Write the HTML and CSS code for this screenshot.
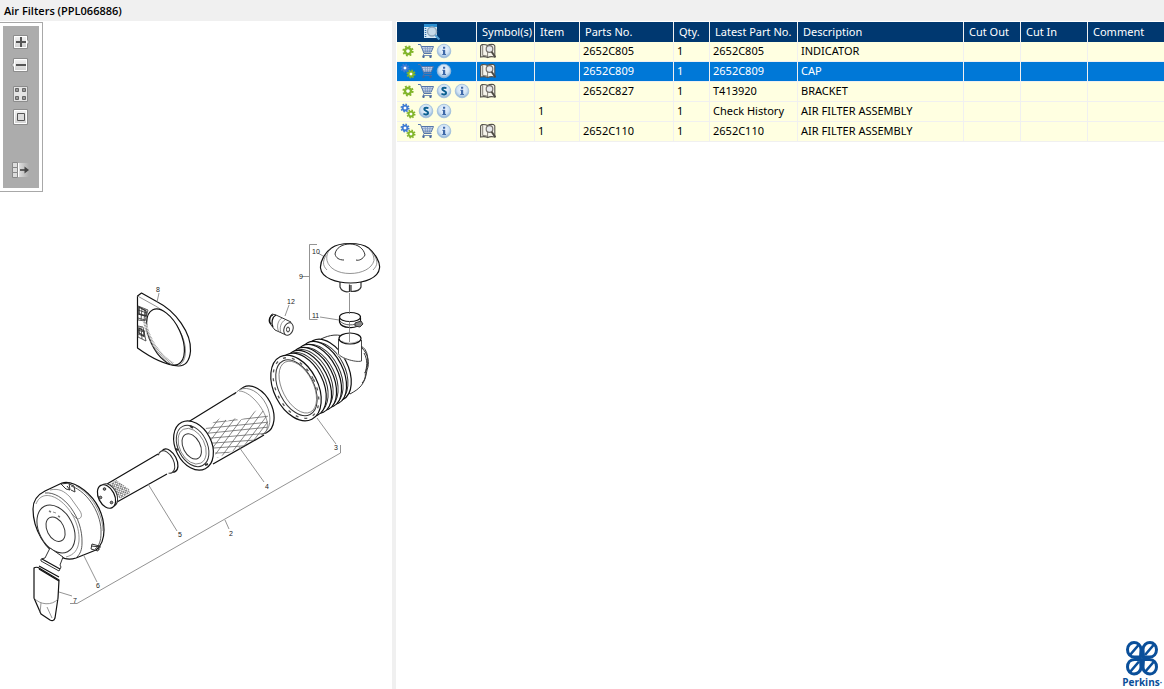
FILE: index.html
```html
<!DOCTYPE html>
<html lang="en">
<head>
<meta charset="utf-8">
<title>Air Filters (PPL066886)</title>
<link rel="stylesheet" href="styles.css">
</head>
<body>
<svg class="defs" aria-hidden="true">
  <defs>
    <linearGradient id="face" x1="0" y1="0" x2="0" y2="1"><stop offset="0" stop-color="#f4f4f4"/><stop offset="1" stop-color="#cfcfcf"/></linearGradient>
    <radialGradient id="ball" cx=".5" cy=".4" r=".6"><stop offset="0" stop-color="#f4f9ff"/><stop offset=".6" stop-color="#cfe2f4"/><stop offset="1" stop-color="#86acd2"/></radialGradient>
    <linearGradient id="fade"><stop offset="0" stop-color="#e8e8e8"/><stop offset="1" stop-color="#acacac"/></linearGradient>
    <symbol id="cog" viewBox="-8 -8 16 16">
      <circle r="5" fill="none" stroke="currentColor" stroke-width="2" stroke-dasharray="2 1.927"/>
      <circle r="3.200" fill="#fff" stroke="currentColor" stroke-width="2.600"/>
    </symbol>
    <symbol id="gear" viewBox="0 0 16 16"><use href="#cog" width="15" height="15" x=".5" y=".5" class="green"/></symbol>
    <symbol id="gears" viewBox="0 0 16 16">
      <use href="#cog" x="-1" y="-1" width="12" height="12" class="blue"/>
      <use href="#cog" x="5" y="5" width="12" height="12" class="green"/>
    </symbol>
    <symbol id="cart" viewBox="0 0 16 16">
      <path d="M3.500 3.500h11.500l-2 5.500H5.500z" fill="#d3deef"/>
      <path d="M3.800 5.300h10.500M4.800 7.200h9M7 3.500l.8 5.500M9.500 3.500v5.500M12.200 3.500l-.8 5.500" fill="none" stroke="#7e99c4" stroke-width=".8"/>
      <path d="M0 1.500h2.500l3.500 9h7.500M3.500 3.500h12l-2.300 5.500H5.500" fill="none" stroke="#5475aa" stroke-width="1"/>
      <path d="M6.200 10.500l-1.200 2h9" fill="none" stroke="#5475aa" stroke-width=".8"/>
      <circle cx="5.500" cy="13.800" r="1.200" fill="#44649a"/><circle cx="12.500" cy="13.800" r="1.200" fill="#44649a"/>
    </symbol>
    <symbol id="info" viewBox="0 0 16 16">
      <circle cx="8" cy="8" r="6.800" fill="url(#ball)" stroke="#9dbddc" stroke-width=".8"/>
      <path d="M7 3.800h2.200v1.900H7zM6.300 6.700h2.900v4.300h.8v1.100H6.300V11H7V7.800h-.7z" fill="#3f69a8"/>
    </symbol>
    <symbol id="sup" viewBox="0 0 16 16">
      <circle cx="8" cy="8" r="6.800" fill="url(#ball)" stroke="#9dbddc" stroke-width=".8"/>
      <path d="M10.300 5.500C9.500 4.500 6.300 4.200 6.200 6.100 6.200 8 10.200 7.600 10.200 9.900c-.1 2-3.600 1.900-4.700.6" fill="none" stroke="#0b5f8f" stroke-width="1.900"/>
    </symbol>
    <symbol id="book" viewBox="0 0 16 16">
      <path d="M.6 2.800L2 1.500c2 0 4-.2 5.500 1 1.800-1.200 4-1.200 6-1L14.800 3v11c-2.500-.5-5.300-.5-7 .5-2-1-4.600-1-7.200-.5z" fill="#f6f4ec" stroke="#55534d" stroke-width="1.100"/>
      <path d="M2.700 2v10.500c2-.2 3.800 0 5 1.200M7.600 3v11" fill="none" stroke="#77736a" stroke-width=".9"/>
      <circle cx="9.500" cy="6" r="3.300" fill="#e7e9ec" stroke="#77736f" stroke-width="1.200"/>
      <path d="M11.600 8.800l3.800 5.500" stroke="#4e4b46" stroke-width="2"/>
    </symbol>
    <clipPath id="gauze"><path d="M206 427l16-10 5 4 9-3 3 3 21-13 8 7-1 17-20 13-30 13-4-10-8-9z"/></clipPath>
    <pattern id="dots" width="3" height="3" patternUnits="userSpaceOnUse" patternTransform="rotate(-25)">
      <path d="M0 0l3 3M3 0L0 3" stroke="#333" stroke-width=".6"/>
    </pattern>
  </defs>
</svg>

<header class="title">Air Filters (PPL066886)</header>
<main class="work">
  <section class="drawing" aria-label="Exploded view">
    <svg class="diagram" viewBox="0 21 392 668">
      <g class="ink">
        <!-- 8 bracket -->
        <path d="M137.500 296l4-3 16 9c18 9 34 31 33 49-1 11-5 15-12 15-14-1-30-10-41-18z" class="bold"/>
        <path d="M137.500 296l18 10c18 10 30 30 30 45 0 8-3 13-7 14.500" class="thin"/>
        <ellipse cx="165.500" cy="337" rx="15.500" ry="30" transform="rotate(-25 165.500 337)" class="bold"/>
        <path d="M145 322c3 18 15 35 28 42" stroke="#888" stroke-width="3.500" stroke-dasharray=".7 .8"/>
        <path d="M138 306l10 4-3 11-7-1zM138 310l9 3M138 314l8 2M138 318l7 2M142 308l-1 12M145 309l-1 12M138 326l5 1 3 14-8-4zM138 330l6 2M138 334l7 3M141 327l1 12" stroke-width=".8"/>
        <path d="M139 307l7 4v5l-7-2zM139 328l5 3v5l-5-3z" fill="none" stroke-width="1.400"/>
        <!-- 10 cap -->
        <path d="M340 280v7c2 5 7 5 9.500 4.500v-7M351 285v6.500c3 0 9-.5 10-4.500v-7" stroke-width="1.200"/>
        <path d="M320.500 268c-.5-7 5-16 11-20 8-6 29-6 37 0 6 5 12 14 11 20-1 10-15 15-29 15s-29-5-30-15z" class="bold"/>
        <path d="M332 247.500c-4 3-6 8-5 13 2 8 11 13 23 13s22-5 24-13c0-5-2-9-6-12.500M326 255c-3 6-4 10 1 15M374 255c4 6 4 10-1 15" class="thin" fill="none"/>
        <path d="M335 254c1-6 7-10 15-10s14 5 15 11c-2 4-6 6-9 5M335 254c1 4 4 6 9 6" fill="none"/>
        <!-- 11 clamp -->
        <ellipse cx="350" cy="317" rx="10.500" ry="4.500" class="bold"/>
        <path d="M339.500 318v4c2 7 17 7 21 2v-6" fill="none" class="bold"/>
        <path d="M340 321c4 5 15 5 20 1" fill="none" stroke-width=".8"/>
        <path d="M355 323l6-2 2 3-3 3-5-1z" fill="#888"/>
        <!-- 3 body -->
        <path d="M321 339c8-4 18-6 26-1l15 10c6 6 8 15 5 22-2 15-8 19-17 24z"/>
        <path d="M360 346c9 2 9 17 6 25M364 353c4 7 3 14 1 20M362 383c3-3 4-7 3-11" fill="none"/>
        <g transform="translate(328 370) rotate(-27)"><ellipse rx="20" ry="33" class="bold"/></g>
        <g transform="translate(325 372) rotate(-27)"><ellipse rx="20" ry="32"/></g>
        <g transform="translate(323 373) rotate(-27)"><ellipse rx="20" ry="34" class="bold"/></g>
        <g transform="translate(320 375) rotate(-27)"><ellipse rx="20" ry="32.500"/></g>
        <g transform="translate(318 376) rotate(-27)"><ellipse rx="20" ry="34" class="bold"/></g>
        <g transform="translate(315 378) rotate(-27)"><ellipse rx="20" ry="32.500"/></g>
        <g transform="translate(313 379) rotate(-27)"><ellipse rx="20" ry="34" class="bold"/></g>
        <g transform="translate(310 380) rotate(-27)"><ellipse rx="20" ry="32.500"/></g>
        <g transform="translate(308 382) rotate(-27)"><ellipse rx="20" ry="34" class="bold"/></g>
        <g transform="translate(305 383) rotate(-27)"><ellipse rx="20" ry="32.500"/></g>
        <g transform="translate(302 385) rotate(-27)"><ellipse rx="21" ry="34" class="bold"/></g>
        <g transform="translate(296 388) rotate(-27)"><ellipse rx="22" ry="35" class="bold"/><ellipse rx="19.500" ry="32.500" stroke="#555" stroke-width="1.300" stroke-dasharray="3 6"/><ellipse cx=".5" rx="17.500" ry="30"/><ellipse cx="2" rx="15.500" ry="28" class="thin"/></g>
        <path d="M338.500 339l-1 16c4 4 19 7 24 4l-.5-19" stroke="none"/>
        <path d="M338.500 339v14c-1 4 17 10 23 8v-21" fill="none" stroke-width=".9"/>
        <ellipse cx="350" cy="338.500" rx="11" ry="5.500" class="bold"/>
        <path d="M342 341c3 3 12 3 16 0" class="thin"/>
        <path d="M349.500 293v21M349.500 321v21" class="lead"/>
        <!-- 12 indicator -->
        <path d="M272 314l4 1 15 7-5 13-11-5-4-5c-2-4-1-9 1-11z"/>
        <path d="M273 315c-4 1-5 7-2 9M276 315c-4 2-5 8-3 12" class="bold" fill="none" stroke-width="1.600"/>
        <path d="M282 318c-4 2-6 9-3 14M285 320c-4 2-6 8-4 13" fill="none" class="thin"/>
        <ellipse cx="288.500" cy="329" rx="4.500" ry="6.500" transform="rotate(20 288.500 329)"/>
        <ellipse cx="288" cy="329.500" rx="1.500" ry="2.500"/>
        <!-- 4 element -->
        <g transform="translate(255 410) rotate(-27)"><ellipse rx="17" ry="25.500" class="bold"/></g>
        <g transform="translate(251 412) rotate(-27)"><ellipse rx="17" ry="25" class="thin"/></g>
        <path d="M189 421.500l54-31.500 19 46-49 28z" stroke="none"/>
        <path d="M189 421.500l47-29M213 464l51-29" class="bold"/>
        <path d="M239 391c11 0 25 17 28 30 1 6 0 10-3 13" class="thin" fill="none"/>
        <path clip-path="url(#gauze)" fill="none" stroke="#555" stroke-width=".7" d="M200 444l27-36M204 449l31-41M208 454l34-45M212 459l37-50M216 464l40-54M221 467l42-56M228 467l38-50M235 465l38-50M242 465l33-43M200 424l70-8M200 429l70-7M200 434l70-7M200 439l70-6M200 444l70-5M200 449l70-5M200 454l70-4M200 459l70-4"/>
        <g transform="translate(193.500 445.500) rotate(-27)"><ellipse rx="18" ry="26" class="bold"/><ellipse cx="-1" rx="14.500" ry="22"/><ellipse cx="-1.500" rx="12.500" ry="19" class="thin"/><ellipse cx="-2" rx="8.500" ry="13.500"/></g>
        <path d="M190 426l3 2M205 465l3-1M176 449l2 1" stroke-width="2"/>
        <!-- 5 inner element -->
        <g transform="translate(169.500 460.500) rotate(-27)"><ellipse rx="7" ry="12.500" class="bold"/></g>
        <g transform="translate(166.500 462) rotate(-27)"><ellipse rx="7" ry="12"/></g>
        <path d="M107 484l52-29 10 18-52 29z" stroke="none"/>
        <path d="M107 484l51-30M117 502l50-28" class="bold"/>
        <path d="M110 484l6-4 13 9 1 4-10 6z" fill="url(#dots)" stroke="none"/>
        <g transform="translate(109 495) rotate(-27)"><ellipse rx="7.500" ry="12"/></g>
        <g transform="translate(106.500 496.500) rotate(-27)"><ellipse rx="8" ry="12.500" class="bold"/></g>
        <g fill="#888"><circle cx="104.500" cy="489" r="1.300"/><circle cx="100.500" cy="497.500" r="1.300"/><circle cx="111.500" cy="502.500" r="1.300"/></g>
        <!-- 6 cover -->
        <path d="M33 509c0-9 4-14 12-18l17-8c7-2 14 1 22 7 13 10 20 25 20 40 0 10-3 16-8 20l-20 8c-6 2-12 1-16-2-14-6-27-26-27-47z" class="bold"/>
        <path d="M71 486c18 6 31 30 30 47 0 8-2 13-6 16M45 493c18-2 38 24 37 50 0 7-2 11-5 14" fill="none" stroke-width=".8"/>
        <path d="M76 486c16 8 27 29 27 45M36 504c4-10 12-10 20-6 14 8 24 26 23 43-1 9-5 14-13 16M50 490c9-2 14 1 20 7l10 14c3 5 1 8-3 8l-6-6" class="thin" fill="none"/>
        <g transform="translate(56 529) rotate(-27)"><ellipse rx="17" ry="25.500"/><ellipse cx="-.5" rx="8.500" ry="13"/></g>
        <path d="M49 511l2 1M58 516l2 1" stroke="#777" stroke-width="1.400"/>
        <path d="M53 512l3 1" class="thin"/>
        <path d="M61 484l8-1 1 7-4-1zM69 484l5 2 1 6-4-2M67 486l3 4M92 544l7 2-1 5-7-2zM91 546l10 1M99 545v5" fill="none"/>
        <path d="M50 548l-5 10-4 1v2l18 10 2-4-1-2 3-8z"/>
        <path d="M42 559l18 10" class="bold" fill="none"/>
        <!-- 7 valve -->
        <path d="M34 568c1-1 4-1 5 0l20 12-1 18-3 20c-1 3-3 3-5 2l-9-6-7-16z" class="bold"/>
        <path d="M39 566l20 11M39 569l20 12" class="bold" fill="none"/>
        <path d="M34 598c6 7 18 8 24 1M40 613l1-10M47 607l5 11" fill="none" class="thin"/>
      </g>
      <path class="lead" d="M159 293l-2 9M289 305l-4 11M317 244.500h-7.500v75h8M309 276.500h-7M318 253l5 3M320 317l19 3M317 418l19 26M239 447l25 35M148 484l29 47M225 520l4 9M83 554l14 28M59 592l13 4M70 603.500h7l263.500-150.500v-8"/>
      <g class="nums">
        <text x="156" y="292">8</text><text x="287" y="304">12</text><text x="312" y="254">10</text><text x="299" y="279">9</text><text x="312" y="318">11</text><text x="334" y="450">3</text><text x="265" y="489">4</text><text x="178" y="537">5</text><text x="229" y="536">2</text><text x="96" y="588">6</text><text x="73" y="603">7</text>
      </g>
    </svg>
    <div class="toolbar">
      <div class="tools">
        <button type="button" aria-label="Zoom in"><svg viewBox="0 0 18 16"><path d="M1.500 1.500h14V6l2 2-2 2v4.500h-14z" fill="url(#face)" stroke="#8c8c8c"/><path d="M2.500 2.500h12v11h-12z" fill="none" stroke="#fff"/><path d="M4 8h10M9 3v10" stroke="#555" stroke-width="2"/></svg></button>
        <button type="button" aria-label="Zoom out"><svg viewBox="0 0 18 16"><path d="M1.500 1.500h14v13h-14V10l-2-2 2-2z" fill="url(#face)" stroke="#8c8c8c"/><path d="M2.500 2.500h12v11h-12z" fill="none" stroke="#fff"/><path d="M4 8h10" stroke="#555" stroke-width="2"/></svg></button>
        <button type="button" aria-label="Fit to window" class="apart"><svg viewBox="0 0 18 16"><path d="M1.500.5h14v15h-14z" fill="#e4e4e4" stroke="#8c8c8c"/><path d="M3.500 2.500h3v3h-3zM10.500 2.500h3v3h-3zM3.500 10.500h3v3h-3zM10.500 10.500h3v3h-3z" fill="#999" stroke="#666"/></svg></button>
        <button type="button" aria-label="Actual size"><svg viewBox="0 0 18 16"><path d="M1.500.5h14v15h-14z" fill="url(#face)" stroke="#8c8c8c"/><path d="M2.500 1.500h12v13h-12z" fill="none" stroke="#fff"/><path d="M5.500 4.500h7v7h-7z" fill="#ddd" stroke="#555"/></svg></button>
        <button type="button" aria-label="Hide list" class="far"><svg viewBox="0 0 18 16"><path d="M5 1h12v14H5z" fill="url(#fade)"/><path d="M.5.500h5v5h-5zM.5 5.500h5v5h-5zM.5 10.500h5v5h-5z" fill="#ddd" stroke="#888"/><path d="M6.500 1v14" stroke="#fff"/><path d="M8 8h6" stroke="#444" stroke-width="1.600"/><path d="M12.500 4.500L17 8l-4.500 3.500z" fill="#444"/></svg></button>
      </div>
    </div>
  </section>

  <section class="list">
    <table class="parts">
      <colgroup><col class="c-act"><col class="c-sym"><col class="c-item"><col class="c-part"><col class="c-qty"><col class="c-late"><col class="c-desc"><col class="c-out"><col class="c-in"><col></colgroup>
      <thead>
        <tr>
          <th class="find"><button type="button" aria-label="Search list"><svg viewBox="0 0 16 16"><path d="M0 1h13v13H0z" fill="#d7e9f6"/><path d="M0 0h13v3H0z" fill="#2c8fd0"/><path d="M1.500 4v10" stroke="#2c6ea8" stroke-width="1.500" stroke-dasharray="1 1"/><circle cx="8" cy="7.500" r="4.500" fill="#c6d9e8" stroke="#93a9bc" stroke-width="1.400"/><path d="M11.300 11l4 4.500" stroke="#4f9bd0" stroke-width="2"/></svg></button></th>
          <th>Symbol(s)</th><th>Item</th><th>Parts No.</th><th>Qty.</th><th>Latest Part No.</th><th>Description</th><th>Cut Out</th><th>Cut In</th><th>Comment</th>
        </tr>
      </thead>
      <tbody>
        <tr>
          <td><div class="icons"><svg><use href="#gear"/></svg><button type="button" aria-label="Add to cart"><svg><use href="#cart"/></svg></button><button type="button" aria-label="Information"><svg><use href="#info"/></svg></button></div></td>
          <td><div class="icons"><button type="button" aria-label="View symbol"><svg><use href="#book"/></svg></button></div></td>
          <td></td><td>2652C805</td><td>1</td><td>2652C805</td><td>INDICATOR</td><td></td><td></td><td></td>
        </tr>
        <tr class="selected">
          <td><div class="icons"><svg><use href="#gears"/></svg><button type="button" aria-label="Add to cart"><svg><use href="#cart"/></svg></button><button type="button" aria-label="Information"><svg><use href="#info"/></svg></button></div></td>
          <td><div class="icons"><button type="button" aria-label="View symbol"><svg><use href="#book"/></svg></button></div></td>
          <td></td><td>2652C809</td><td>1</td><td>2652C809</td><td>CAP</td><td></td><td></td><td></td>
        </tr>
        <tr>
          <td><div class="icons"><svg><use href="#gear"/></svg><button type="button" aria-label="Add to cart"><svg><use href="#cart"/></svg></button><button type="button" aria-label="Supersession"><svg><use href="#sup"/></svg></button><button type="button" aria-label="Information"><svg><use href="#info"/></svg></button></div></td>
          <td><div class="icons"><button type="button" aria-label="View symbol"><svg><use href="#book"/></svg></button></div></td>
          <td></td><td>2652C827</td><td>1</td><td>T413920</td><td>BRACKET</td><td></td><td></td><td></td>
        </tr>
        <tr>
          <td><div class="icons"><svg><use href="#gears"/></svg><button type="button" aria-label="Supersession"><svg><use href="#sup"/></svg></button><button type="button" aria-label="Information"><svg><use href="#info"/></svg></button></div></td>
          <td></td>
          <td>1</td><td></td><td>1</td><td>Check History</td><td>AIR FILTER ASSEMBLY</td><td></td><td></td><td></td>
        </tr>
        <tr>
          <td><div class="icons"><svg><use href="#gears"/></svg><button type="button" aria-label="Add to cart"><svg><use href="#cart"/></svg></button><button type="button" aria-label="Information"><svg><use href="#info"/></svg></button></div></td>
          <td><div class="icons"><button type="button" aria-label="View symbol"><svg><use href="#book"/></svg></button></div></td>
          <td>1</td><td>2652C110</td><td>1</td><td>2652C110</td><td>AIR FILTER ASSEMBLY</td><td></td><td></td><td></td>
        </tr>
      </tbody>
    </table>
    <footer class="brand">
      <svg viewBox="0 0 34 36" aria-hidden="true">
        <g fill="none" stroke="#0a4f9a" stroke-width="3">
          <path d="M15.500 17H9.500C5 17 2.500 13.500 2.500 9.500s3-7 6.500-7 7 2.500 7 7z"/><path d="M18.500 17h6c4.500 0 7-3.500 7-7.500s-3-7-6.500-7-7 2.500-7 7z"/>
          <path d="M15.500 19.500h-6c-4.500 0-7 3.500-7 7.500s3 7 6.500 7 7-2.500 7-7z"/><path d="M18.500 19.500h6c4.500 0 7 3.500 7 7.500s-3 7-6.500 7-7-2.500-7-7z"/>
          <path d="M5 15L14 4.500M20 15L29 4.500M5 32l9-10.500M20 32l9-10.500" stroke-width="2.600"/>
        </g>
      </svg>
      <div class="name">Perkins<span class="dot">·</span></div>
    </footer>
  </section>
</main>
</body>
</html>
```
FILE: styles.css
```css
* { box-sizing: border-box; }
body {
  margin: 0;
  min-height: 100vh;
  display: flex;
  flex-direction: column;
  background: #fff;
  color: #000;
  font: 11px/18px "Noto Sans", "Open Sans", sans-serif;
}
button { display: block; margin: 0; padding: 0; border: 0; background: none; cursor: pointer; }
svg { display: block; }
.defs { position: absolute; width: 0; height: 0; }
.green { color: #82b52b; }
.blue { color: #3f7bd2; }

.title {
  padding: 1px 4px 0;
  line-height: 20px;
  background: #f0f0f0;
  font-family: "Open Sans", "Noto Sans", sans-serif;
  font-weight: 600;
}
.work { flex: 1; display: flex; }

.drawing {
  position: relative;
  flex: 0 0 396px;
  border-right: 4px solid #f0f0f0;
}
.diagram { width: 100%; }
.ink { fill: #fff; stroke: #333; stroke-width: 1; stroke-linejoin: round; }
.ink .bold { stroke: #111; stroke-width: 1.2; }
.ink .thin { stroke: #666; stroke-width: .7; }
.lead { fill: none; stroke: #777; stroke-width: .8; }
.nums { font: 7px "Liberation Sans", sans-serif; fill: #222; }

.toolbar {
  position: absolute;
  top: 1px;
  left: 0;
  padding: 3px;
  border: 1px solid #a8a8a8;
  border-left: 0;
  background: #fff;
}
.tools {
  display: flex;
  flex-direction: column;
  gap: 7px;
  padding: 8px 9px 10px;
  background: #acacac;
}
.tools svg { width: 18px; height: 16px; overflow: visible; }
.tools .apart { margin-top: 6px; }
.tools .far { margin-top: 30px; }

.list {
  flex: 1;
  min-width: 0;
  display: flex;
  flex-direction: column;
  justify-content: space-between;
  padding: 1px 0 0 1px;
}
.parts { width: 100%; table-layout: fixed; border-collapse: separate; border-spacing: 0; }
.c-act { width: 80px; }
.c-sym { width: 58px; }
.c-item { width: 45px; }
.c-part { width: 94px; }
.c-qty { width: 36px; }
.c-late { width: 88px; }
.c-desc { width: 166px; }
.c-out { width: 57px; }
.c-in { width: 67px; }
.parts th, .parts td {
  height: 20px;
  padding: 0 0 0 3px;
  border-right: 1px solid #f0f0f0;
  text-align: left;
  vertical-align: top;
  white-space: nowrap;
}
.parts th:last-child, .parts td:last-child { border-right: 0; }
.parts th { padding-left: 5px; background: #003870; color: #fff; font-weight: 400; line-height: 20px; }
.parts .find { padding: 2px 0 0 27px; }
.find svg { width: 16px; height: 16px; }
.parts td { background: #ffffe1; border-bottom: 1px solid #f0f0f0; }
.parts .selected td { background: #0078d7; color: #fff; }
.icons { display: flex; align-items: center; gap: 2px; height: 18px; }
.icons svg { width: 16px; height: 16px; }

.brand { align-self: flex-end; display: flex; flex-direction: column; align-items: center; padding-right: 2px; color: #0a4f9a; }
.brand svg { width: 34px; height: 36px; }
.name { font: 700 10px/12px "Open Sans", sans-serif; }
.dot { font-size: 8px; }
```
